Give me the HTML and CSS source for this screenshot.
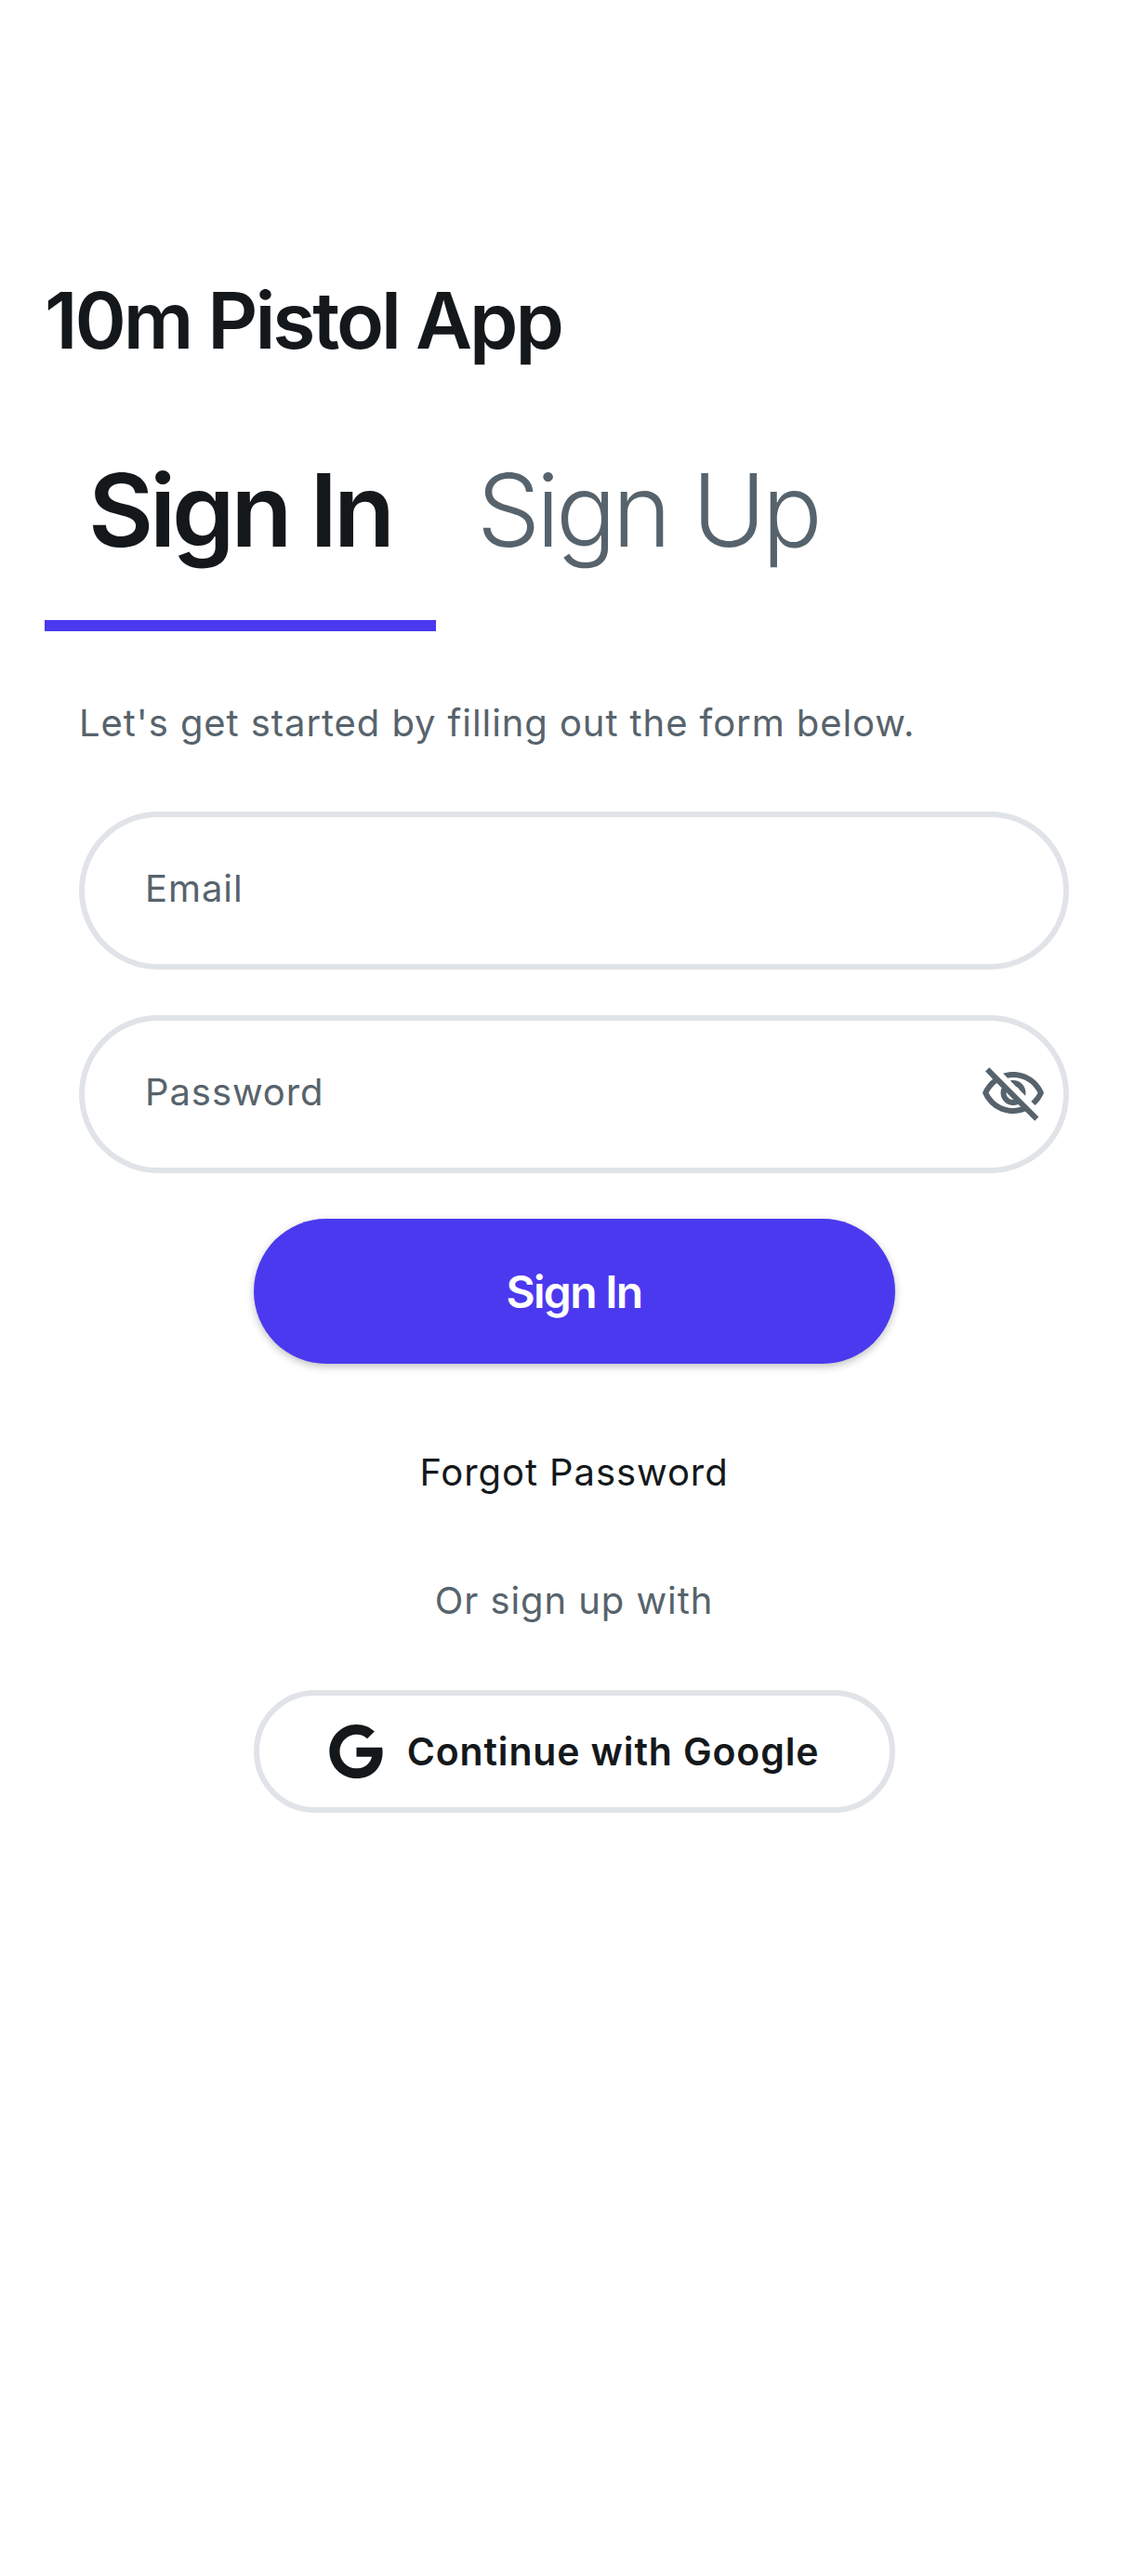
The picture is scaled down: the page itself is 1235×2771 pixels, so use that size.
FILE: index.html
```html
<!DOCTYPE html>
<html lang="en">

<head>
    <meta charset="UTF-8">
    <meta name="viewport" content="width=device-width, initial-scale=1.0">
    <title>10m Pistol App</title>
    <link rel="stylesheet" href="styles.css">
</head>

<body>
    <header class="app-header">
        <h1>10m Pistol App</h1>
    </header>

    <nav class="tabs">
        <a class="tab active" href="#">Sign In</a>
        <a class="tab" href="#">Sign Up</a>
    </nav>

    <main class="content">
        <p class="intro">Let's get started by filling out the form below.</p>

        <form class="auth-form">
            <div class="field">
                <span class="placeholder">Email</span>
            </div>
            <div class="field">
                <span class="placeholder">Password</span>
                <svg class="eye" viewBox="0 0 24 24" width="72" height="72">
                    <path d="M12 6c3.79 0 7.17 2.13 8.82 5.5-.59 1.22-1.42 2.27-2.41 3.12l1.41 1.41c1.39-1.23 2.49-2.77 3.18-4.53C21.27 7.11 17 4 12 4c-1.27 0-2.49.2-3.64.57l1.65 1.65C10.66 6.09 11.32 6 12 6zm-1.07 1.14L13 9.21c.57.25 1.03.71 1.28 1.28l2.07 2.07c.08-.34.14-.7.14-1.07C16.5 9.01 14.48 7 12 7c-.37 0-.72.05-1.07.14zM2.01 3.87l2.68 2.68C3.06 7.83 1.77 9.53 1 11.5 2.73 15.89 7 19 12 19c1.52 0 2.98-.29 4.32-.82l3.42 3.42 1.41-1.41L3.42 2.45 2.01 3.87zm7.5 7.5l2.61 2.61c-.04.01-.08.02-.12.02-1.38 0-2.5-1.12-2.5-2.5 0-.05.01-.08.01-.13zm-3.4-3.4l1.75 1.75c-.23.55-.36 1.15-.36 1.78 0 2.48 2.02 4.5 4.5 4.5.63 0 1.23-.13 1.77-.36l.98.98c-.88.24-1.8.38-2.75.38-3.79 0-7.17-2.13-8.82-5.5.7-1.43 1.72-2.61 2.93-3.53z"/>
                </svg>
            </div>
            <button class="btn-primary" type="button">Sign In</button>
            <a class="forgot" href="#">Forgot Password</a>
            <p class="or-text">Or sign up with</p>
            <button class="btn-google" type="button">
                <svg class="google-icon" viewBox="0 0 488 512" width="58" height="60">
                    <path d="M488 261.8C488 403.3 391.1 504 248 504 110.8 504 0 393.2 0 256S110.8 8 248 8c66.8 0 123 24.5 166.3 64.9l-67.5 64.9C258.5 52.6 94.3 116.6 94.3 256c0 86.5 69.1 156.6 153.7 156.6 98.2 0 135-70.4 140.8-106.9H248v-85.3h236.1c2.3 12.7 3.9 24.9 3.9 41.4z"/>
                </svg>
                <span>Continue with Google</span>
            </button>
        </form>
    </main>
</body>

</html>
```

FILE: styles.css
```css
* {
    box-sizing: border-box;
}

body {
    font-family: Inter, sans-serif;
    margin: 0;
    padding: 0;
    background-color: #fff;
    color: #14181b;
}

.app-header {
    padding: 295px 48px 0;
}

.app-header h1 {
    margin: 0;
    font-size: 84px;
    line-height: 100px;
    font-weight: 600;
    letter-spacing: -3.1px;
}

.tabs {
    display: flex;
    margin: 60px 48px 0;
}

.tab {
    display: block;
    height: 224px;
    padding: 29px 48px 0 44px;
    font-size: 108px;
    line-height: 130px;
    font-weight: 300;
    letter-spacing: -4.2px;
    color: #57636c;
    text-decoration: none;
}

.tab.active {
    padding-left: 47px;
    font-weight: 600;
    color: #14181b;
    border-bottom: 12px solid #4b39ef;
}

.content {
    padding: 0 85px;
}

.intro {
    margin: 74px 0 0;
    font-size: 40px;
    line-height: 50px;
    letter-spacing: 0.92px;
    color: #57636c;
}

.auth-form {
    display: flex;
    flex-direction: column;
    align-items: center;
    margin-top: 70px;
}

.field {
    display: flex;
    align-items: center;
    justify-content: space-between;
    width: 100%;
    height: 170px;
    margin-bottom: 49px;
    padding: 0 18px 0 65px;
    border: 6px solid #e0e3e7;
    border-radius: 85px;
}

.placeholder {
    margin-top: -4px;
    font-size: 40px;
    line-height: 50px;
    letter-spacing: 0.92px;
    color: #57636c;
}

.eye {
    fill: #57636c;
}

.btn-primary {
    width: 690px;
    height: 156px;
    border: none;
    border-radius: 78px;
    background-color: #4b39ef;
    color: #fff;
    font-family: inherit;
    font-size: 48px;
    font-weight: 600;
    letter-spacing: -1.7px;
    box-shadow: 0 3px 9px rgba(0, 0, 0, 0.25);
}

.forgot {
    margin-top: 92px;
    font-size: 40px;
    line-height: 50px;
    letter-spacing: 0.92px;
    color: #14181b;
    text-decoration: none;
}

.or-text {
    margin: 88px 0 0;
    font-size: 40px;
    line-height: 50px;
    letter-spacing: 0.92px;
    color: #57636c;
}

.btn-google {
    display: flex;
    align-items: center;
    justify-content: center;
    gap: 26px;
    width: 690px;
    height: 132px;
    margin-top: 71px;
    border: 6px solid #e0e3e7;
    border-radius: 66px;
    background-color: #fff;
    color: #14181b;
    font-family: inherit;
    font-size: 41px;
    font-weight: 600;
    letter-spacing: 0.85px;
}

.google-icon {
    fill: #14181b;
}
```
